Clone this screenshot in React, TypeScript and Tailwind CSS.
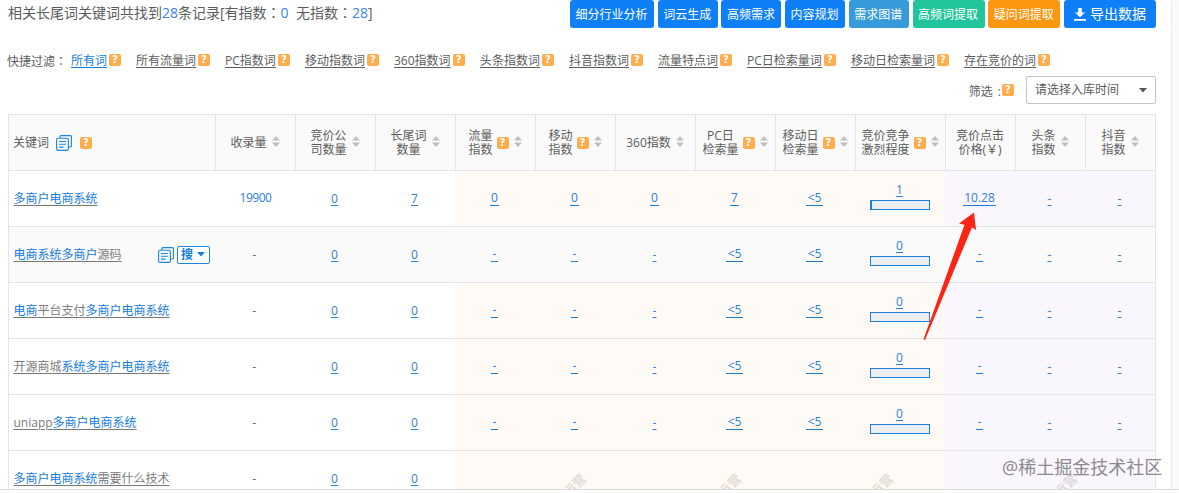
import React from "react";
import clsx from "clsx";

const actions = [
  { label: "细分行业分析", style: "w-[84px] bg-[#0f7ff8]" },
  { label: "词云生成", style: "w-[60px] bg-[#0f7ff8]" },
  { label: "高频需求", style: "w-[60px] bg-[#0f7ff8]" },
  { label: "内容规划", style: "w-[60px] bg-[#0f7ff8]" },
  { label: "需求图谱", style: "w-[60px] bg-[#379bdb]" },
  { label: "高频词提取", style: "w-[72px] bg-[#22c49c]" },
  { label: "疑问词提取", style: "w-[72px] bg-[#fd9712]" },
];

const filters = [
  { label: "所有词", width: "w-[65px]", active: true },
  { label: "所有流量词", width: "w-[89px]" },
  { label: "PC指数词", width: "w-[80px]" },
  { label: "移动指数词", width: "w-[89px]" },
  { label: "360指数词", width: "w-[86px]" },
  { label: "头条指数词", width: "w-[89px]" },
  { label: "抖音指数词", width: "w-[89px]" },
  { label: "流量特点词", width: "w-[89px]" },
  { label: "PC日检索量词", width: "w-[104px]" },
  { label: "移动日检索量词", width: "w-[113px]" },
  { label: "存在竞价的词", width: "w-[90px]" },
];

const columns = [
  { lines: ["收录量"], sort: true },
  { lines: ["竞价公", "司数量"], sort: true },
  { lines: ["长尾词", "数量"], sort: true },
  { lines: ["流量", "指数"], help: true, sort: true },
  { lines: ["移动", "指数"], help: true, sort: true },
  { lines: ["360指数"], sort: true },
  { lines: ["PC日", "检索量"], help: true, sort: true },
  { lines: ["移动日", "检索量"], help: true, sort: true },
  { lines: ["竞价竞争", "激烈程度"], help: true, sort: true },
  { lines: ["竞价点击", "价格(￥)"] },
  { lines: ["头条", "指数"], sort: true },
  { lines: ["抖音", "指数"], sort: true },
];

type Row = {
  keyword: { text: string; hit?: boolean }[];
  indexed: string;
  longTail: string;
  flow: string;
  pc: string;
  level: string;
  price: string;
  hover?: boolean;
  partial?: boolean;
};

const base = { indexed: "-", longTail: "0", flow: "-", pc: "<5", level: "0", price: "-" };

const rows: Row[] = [
  { keyword: [{ text: "多商户电商系统", hit: true }], indexed: "19900", longTail: "7", flow: "0", pc: "7", level: "1", price: "10.28" },
  { ...base, keyword: [{ text: "电商系统多商户", hit: true }, { text: "源码" }], hover: true },
  { ...base, keyword: [{ text: "电商", hit: true }, { text: "平台支付" }, { text: "多商户电商系统", hit: true }] },
  { ...base, keyword: [{ text: "开源商城" }, { text: "系统多商户电商系统", hit: true }] },
  { ...base, keyword: [{ text: "uniapp" }, { text: "多商户电商系统", hit: true }] },
  { ...base, keyword: [{ text: "多商户电商系统", hit: true }, { text: "需要什么技术" }], partial: true },
];

function Help() {
  return (
    <span className="flex h-3 w-3 shrink-0 items-center justify-center rounded-[2px] bg-[#ffad4d] font-['DejaVu_Sans'] text-[10px] leading-none font-bold text-white">
      ?
    </span>
  );
}

function Sort() {
  return (
    <svg className="mb-0.5 shrink-0" width="8" height="11" viewBox="0 0 8 11" fill="#bfbfbf">
      <path d="M4 0 8 4.5H0zM4 11 0 6.5h8z" />
    </svg>
  );
}

function Copy() {
  return (
    <svg className="shrink-0" width="16" height="16" viewBox="0 0 16 16" fill="none" stroke="#1a86e0" strokeWidth="1.1">
      <path d="M4 3V1.6Q4 .6 5 .6H14.4Q15.4 .6 15.4 1.6V11Q15.4 12 14.4 12H12.5" />
      <rect x=".6" y="3.2" width="11.8" height="12.2" rx="1.3" />
      <path d="M3 6.5h7M3 9.3h7M3 12.1h4.5" />
    </svg>
  );
}

// full-width colon with the dots in the middle of its box
function Colon() {
  return <span className="font-['Noto_Sans_CJK_TC']">：</span>;
}

// plain text link, underline sits right below the digits
function TextLink({ children }: { children: string }) {
  return <a className="underline underline-offset-2">{children}</a>;
}

// index link with its own bottom border
function IndexLink({ children }: { children: string }) {
  return (
    <a className="mb-px border-b border-[#1a7fdc] px-[1.5px] text-center leading-[15px]">{children}</a>
  );
}

function Cell({ children, tint }: { children?: React.ReactNode; tint?: string }) {
  return <div className={clsx("flex items-center justify-center pr-px", tint)}>{children}</div>;
}

function KeywordRow({ row }: { row: Row }) {
  const warm = row.hover ? "" : "bg-[#fffaf5]";
  const cool = row.hover ? "" : "bg-[#faf6fd]";
  return (
    <div
      className={clsx(
        "grid h-14 grid-cols-[206px_repeat(8,80px)_90px_70px_70px_70px] border-b border-[#e4e4e4] text-[#2a7de1]",
        row.hover && "bg-[#fafafa]"
      )}
    >
      <div className="flex items-center justify-between pr-[5px] pl-[4.5px]">
        <a>
          {row.keyword.map((part, i) => (
            <span
              key={i}
              className={clsx("underline decoration-[#777] underline-offset-2", part.hit ? "text-[#147be0]" : "text-[#7c7c7c]")}
            >
              {part.text}
            </span>
          ))}
        </a>
        {row.hover && (
          <span className="flex items-center gap-[3px]">
            <Copy />
            <span className="flex h-[18px] w-[33px] items-center justify-between rounded-[2px] border border-[#1a86e0] bg-white pr-1 pl-[3px] font-bold text-[#147be0]">
              搜
              <svg width="8" height="5" viewBox="0 0 8 5" fill="#147be0">
                <path d="M0 0h8L4 4.5z" />
              </svg>
            </span>
          </span>
        )}
      </div>
      <Cell>
        <span className={clsx(row.indexed === "-" ? "text-[#666]" : "mb-0.5 ml-0.5 tracking-[-0.5px]")}>{row.indexed}</span>
      </Cell>
      <Cell><TextLink>0</TextLink></Cell>
      <Cell><TextLink>{row.longTail}</TextLink></Cell>
      <Cell tint={warm}>{!row.partial && <IndexLink>{row.flow}</IndexLink>}</Cell>
      <Cell tint={warm}>{!row.partial && <IndexLink>{row.flow}</IndexLink>}</Cell>
      <Cell tint={warm}>
        {!row.partial && (row.flow === "-" ? <TextLink>-</TextLink> : <IndexLink>{row.flow}</IndexLink>)}
      </Cell>
      <Cell tint={warm}>{!row.partial && <IndexLink>{row.pc}</IndexLink>}</Cell>
      <Cell tint={warm}>{!row.partial && <IndexLink>{"<5"}</IndexLink>}</Cell>
      <Cell tint={warm}>
        {!row.partial && (
          <div className="flex flex-col items-center gap-[3px] pb-[5px] pl-px">
            <span className="pr-px leading-[14px]"><TextLink>{row.level}</TextLink></span>
            <div className={clsx("h-2.5 w-[60px] border border-[#1a7fdc] bg-[#ebeff3]", row.level === "1" && "border-l-2")} />
          </div>
        )}
      </Cell>
      <Cell tint={cool}>{!row.partial && <IndexLink>{row.price}</IndexLink>}</Cell>
      <Cell tint={cool}>{!row.partial && <TextLink>-</TextLink>}</Cell>
      <Cell tint={cool}>{!row.partial && <TextLink>-</TextLink>}</Cell>
    </div>
  );
}

function Arrow() {
  return (
    <svg className="absolute top-[212px] left-[922px]" width="56" height="130" viewBox="922 212 56 130" fill="#fc2414">
      <path d="M974 212.5 959 223.5 964.5 224.8 923.5 339.2 925 340 972 227.2 976 230z" />
    </svg>
  );
}

export default function App() {
  return (
    <div className="relative h-[493px] w-[1179px] overflow-hidden bg-white font-['Open_Sans','Noto_Sans_CJK_SC',sans-serif] text-xs text-[#5c5c5c]">
      <div className="flex h-[490px] overflow-hidden border-b border-[#d9d9d9]">
        <main className="flex w-[1171px] shrink-0 flex-col pl-2">
          {/* Summary and actions */}
          <div className="flex h-7 w-[1148px] shrink-0 items-start justify-between">
            <p className="mt-0.5 text-sm leading-5 whitespace-pre">
              相关长尾词关键词共找到<span className="text-[#3b83f0]">28</span>条记录[有指数<Colon />
              <span className="text-[#3b83f0]">0</span>{"  "}无指数<Colon /><span className="text-[#3b83f0]">28</span>]
            </p>
            <div className="flex h-7 w-[586px] justify-between text-white">
              {actions.map((item) => (
                <button key={item.label} className={clsx("rounded-[3px] pt-px pr-px whitespace-nowrap", item.style)}>
                  {item.label}
                </button>
              ))}
              <button className="flex w-[92px] items-center justify-center gap-1 rounded-[3px] bg-[#0f7ff8] text-sm">
                <svg width="12" height="13" viewBox="0 0 12 13" fill="#fff">
                  <path d="M4.2 0h3.6v4.5H11L6 9.3 1 4.5h3.2zM0 11h12v1.8H0z" />
                </svg>
                导出数据
              </button>
            </div>
          </div>

          {/* Quick filters */}
          <div className="mt-[23px] flex h-5 shrink-0 items-center">
            <span className="-ml-px w-16">快捷过滤<Colon /></span>
            {filters.map((item) => (
              <span key={item.label} className={clsx("flex shrink-0 items-center gap-0.5 whitespace-nowrap", item.width)}>
                <a className={clsx("underline underline-offset-2", item.active && "text-[#147be0]")}>{item.label}</a>
                <span className="mb-[3px]"><Help /></span>
              </span>
            ))}
          </div>

          {/* Date filter */}
          <div className="mt-[5px] flex h-7 w-[1148px] shrink-0 items-center justify-end">
            <span className="mt-[3px] mr-px whitespace-pre">筛选 <span className="ml-0.5">:</span></span>
            <Help />
            <div className="ml-3 flex h-7 w-[130px] items-center justify-between rounded-[2px] border border-[#c4c4c4] pr-2 pl-2">
              请选择入库时间
              <svg width="8" height="5" viewBox="0 0 8 5" fill="#555">
                <path d="M0 0h8L4 4.5z" />
              </svg>
            </div>
          </div>

          {/* Keyword table */}
          <div className="mt-2.5 w-[1148px] shrink-0 border border-[#e4e4e4]">
            <div className="-ml-px grid h-14 grid-cols-[207px_repeat(8,80px)_90px_70px_70px_70px] border-b border-[#e4e4e4] bg-[#fafafa]">
              <div className="flex items-center border-l border-[#e4e4e4] pl-1">
                关键词
                <span className="mr-2 ml-[7px]"><Copy /></span>
                <Help />
              </div>
              {columns.map((col) => (
                <div key={col.lines.join("")} className="flex items-center justify-center border-l border-[#e4e4e4] pr-px leading-[14px]">
                  <div className="text-center whitespace-nowrap">
                    {col.lines.map((line) => (
                      <div key={line}>{line}</div>
                    ))}
                  </div>
                  {col.help && <span className="ml-1"><Help /></span>}
                  {col.sort && <span className="ml-[5px]"><Sort /></span>}
                </div>
              ))}
            </div>
            {rows.map((row, i) => (
              <KeywordRow key={i} row={row} />
            ))}
          </div>
        </main>
        <aside className="w-2 shrink-0 border-l border-[#eaeaea] bg-[#fafafa]" />
      </div>

      {/* Tiled site watermark, cut by the bottom edge */}
      <div className="pointer-events-none absolute top-[470px] left-0 h-[19px] w-full overflow-hidden text-[13px] font-bold text-[#8a8078]/25">
        <span className="absolute top-[7px] left-[562px] -rotate-45">运营</span>
        <span className="absolute top-[7px] left-[717px] -rotate-45">运营</span>
        <span className="absolute top-[7px] left-[869px] -rotate-45">运营</span>
        <span className="absolute top-[7px] left-[1053px] -rotate-45">运营</span>
      </div>

      <Arrow />

      <div className="absolute top-[453px] left-[1002px] text-[18px] leading-7 whitespace-nowrap text-[#8c8a90]">
        @稀土掘金技术社区
      </div>
    </div>
  );
}
